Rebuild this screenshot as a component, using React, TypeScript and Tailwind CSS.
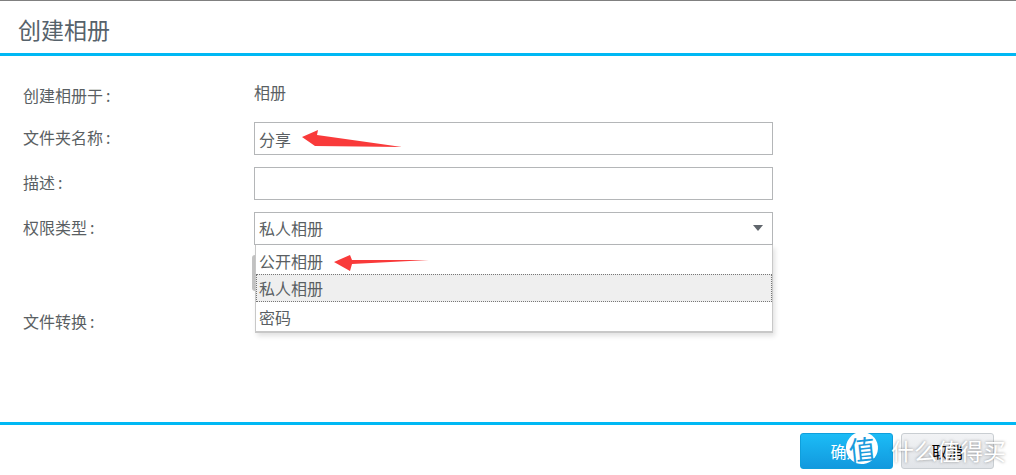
import React from "react";

const font = { fontFamily: '"Noto Sans CJK SC", "Noto Sans", sans-serif' };

function Row({ label, children, className }: { label: string; children?: React.ReactNode; className: string }) {
  return (
    <div className={`flex ${className}`}>
      <div className="w-[231px] shrink-0 pb-[3px] text-[16px] leading-[22px] text-[#5a5f63]">
        {label}
        <span className="ml-[3px]">:</span>
      </div>
      <div className="flex-1">{children}</div>
    </div>
  );
}

function TextBox({ value }: { value?: string }) {
  return (
    <div className="h-[33px] w-[519px] border border-[#b4b6b8] bg-white pl-[4px] text-[16px] leading-[33px] text-[#5a5f63]">
      {value}
    </div>
  );
}

function Arrow({ className, points, w, h }: { className: string; points: string; w: number; h: number }) {
  return (
    <svg className={`absolute ${className}`} width={w} height={h} viewBox={`0 0 ${w} ${h}`}>
      <polygon points={points} fill="#f93a3a" />
    </svg>
  );
}

export default function App() {
  return (
    <div className="relative flex h-[475px] w-[1016px] flex-col overflow-hidden bg-white" style={font}>
      <div className="h-[56px] shrink-0 border-t border-b-[3px] border-t-[#808080] border-b-[#00b8f4] pl-[18px] pt-[11px] text-[23px] leading-[34px] text-[#56626b]">
        创建相册
      </div>

      <div className="flex flex-1 flex-col pl-[23px] pt-[28px]">
        <Row label="创建相册于" className="mb-[16px] h-[22px] items-start">
          <span className="-mt-[3px] block text-[16px] leading-[22px] text-[#5a5f63]">相册</span>
        </Row>
        <Row label="文件夹名称" className="mb-[12px] h-[33px] items-center">
          <TextBox value="分享" />
        </Row>
        <Row label="描述" className="mb-[12px] h-[33px] items-center">
          <TextBox />
        </Row>
        <Row label="权限类型" className="h-[33px] items-center">
          <div className="flex h-[33px] w-[519px] items-center justify-between border border-[#b4b6b8] bg-white pb-[1px] pl-[4px] pr-[9px] text-[16px] text-[#5a5f63]">
            <span>私人相册</span>
            <span className="h-0 w-0 border-x-[5px] border-t-[6px] border-x-transparent border-t-[#60666c]" />
          </div>
        </Row>
        <Row label="文件转换" className="mt-[65px] h-[22px] items-start" />
      </div>

      {/* dropdown list lies over the form */}
      <div className="absolute left-[252px] top-[255px] h-[36px] w-[3px] rounded-l-sm bg-[#c4c4c4]" />
      <div className="absolute left-[255px] top-[245px] w-[518px] border-x border-b-2 border-[#c8c8c8] bg-white text-[16px] text-[#5a5f63] shadow-[2px_3px_5px_rgba(0,0,0,0.12)]">
        <div className="h-[29px] pl-[3px] leading-[33px]">公开相册</div>
        <div className="h-[28px] border border-dotted border-[#777] bg-[#efefef] pl-[2px] leading-[27px]">私人相册</div>
        <div className="h-[29px] pl-[3px] leading-[31px]">密码</div>
      </div>

      <Arrow className="left-[300px] top-[128px]" w={104} h={21} points="2,9 18,2 17,7 102,19 15,18" />
      <Arrow className="left-[332px] top-[253px]" w={99} h={20} points="2,9 18,2 20,7 97,7 20,11 18,18" />

      <div className="flex h-[53px] shrink-0 items-start justify-end gap-[8px] border-t-[3px] border-[#00b8f4] pr-[22px] pt-[8px]">
        <button className="h-[36px] w-[93px] rounded-[3px] border border-[#0f9fdc] bg-gradient-to-b from-[#1cbcf6] to-[#1299de] text-[16px] text-white">
          确定
        </button>
        <button className="h-[36px] w-[93px] rounded-[3px] border border-[#c9ced2] bg-gradient-to-b from-[#f2f3f5] to-[#e1e4e8] text-[16px] text-black">
          取消
        </button>
      </div>

      {/* watermark */}
      <div className="absolute left-[846px] top-[432px] flex h-[32px] w-[32px] -rotate-6 items-center justify-center rounded-full bg-white text-[27px] leading-none text-[#1a9bdc]">
        值
      </div>
      <div className="absolute left-[891px] top-[435px] whitespace-nowrap text-[23px] leading-[30px] text-white [text-shadow:0_0_3px_rgba(70,70,70,0.6)]">
        什么值得买
      </div>
    </div>
  );
}
